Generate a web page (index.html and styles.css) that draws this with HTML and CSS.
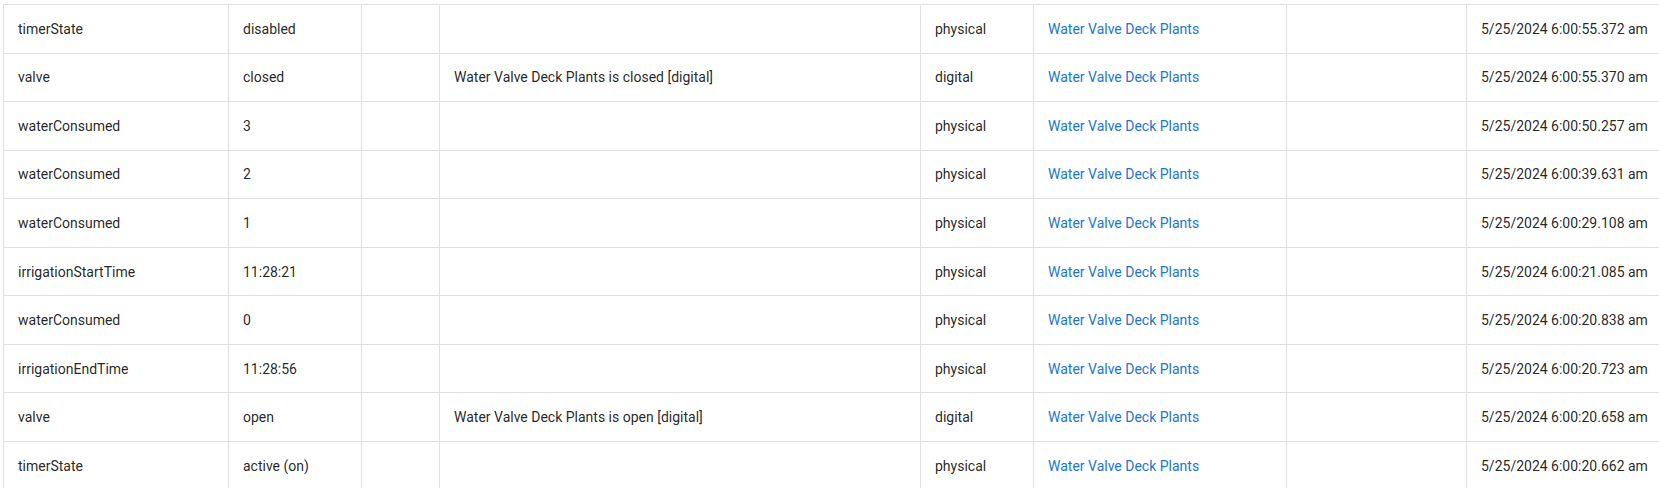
FILE: index.html
```html
<!DOCTYPE html>
<html>
<head>
<meta charset="utf-8">
<link rel="stylesheet" href="styles.css">
</head>
<body>
<div class="wrap">
<table class="events">
<colgroup>
<col class="c-name"><col class="c-value"><col class="c-unit"><col class="c-desc"><col class="c-type"><col class="c-dev"><col class="c-extra"><col class="c-date">
</colgroup>
<tbody>
<tr><td>timerState</td><td>disabled</td><td></td><td></td><td>physical</td><td><a href="#">Water Valve Deck Plants</a></td><td></td><td>5/25/2024 6:00:55.372 am</td></tr>
<tr><td>valve</td><td>closed</td><td></td><td>Water Valve Deck Plants is closed [digital]</td><td>digital</td><td><a href="#">Water Valve Deck Plants</a></td><td></td><td>5/25/2024 6:00:55.370 am</td></tr>
<tr><td>waterConsumed</td><td>3</td><td></td><td></td><td>physical</td><td><a href="#">Water Valve Deck Plants</a></td><td></td><td>5/25/2024 6:00:50.257 am</td></tr>
<tr><td>waterConsumed</td><td>2</td><td></td><td></td><td>physical</td><td><a href="#">Water Valve Deck Plants</a></td><td></td><td>5/25/2024 6:00:39.631 am</td></tr>
<tr><td>waterConsumed</td><td>1</td><td></td><td></td><td>physical</td><td><a href="#">Water Valve Deck Plants</a></td><td></td><td>5/25/2024 6:00:29.108 am</td></tr>
<tr><td>irrigationStartTime</td><td>11:28:21</td><td></td><td></td><td>physical</td><td><a href="#">Water Valve Deck Plants</a></td><td></td><td>5/25/2024 6:00:21.085 am</td></tr>
<tr><td>waterConsumed</td><td>0</td><td></td><td></td><td>physical</td><td><a href="#">Water Valve Deck Plants</a></td><td></td><td>5/25/2024 6:00:20.838 am</td></tr>
<tr><td>irrigationEndTime</td><td>11:28:56</td><td></td><td></td><td>physical</td><td><a href="#">Water Valve Deck Plants</a></td><td></td><td>5/25/2024 6:00:20.723 am</td></tr>
<tr><td>valve</td><td>open</td><td></td><td>Water Valve Deck Plants is open [digital]</td><td>digital</td><td><a href="#">Water Valve Deck Plants</a></td><td></td><td>5/25/2024 6:00:20.658 am</td></tr>
<tr><td>timerState</td><td>active (on)</td><td></td><td></td><td>physical</td><td><a href="#">Water Valve Deck Plants</a></td><td></td><td>5/25/2024 6:00:20.662 am</td></tr>
</tbody>
</table>
</div>
</body>
</html>
```
FILE: styles.css
```css
html, body {
  margin: 0;
  padding: 0;
  background: #ffffff;
  overflow: hidden;
}
.wrap {
  padding: 4px 0 0 3px;
}
.events {
  border-collapse: collapse;
  table-layout: fixed;
  width: 1700px;
  font-family: Roboto, "Liberation Sans", sans-serif;
  font-size: 14px;
  color: rgba(0, 0, 0, 0.87);
}
.c-name { width: 225px; }
.c-value { width: 133px; }
.c-unit { width: 78px; }
.c-desc { width: 481px; }
.c-type { width: 113px; }
.c-dev { width: 253px; }
.c-extra { width: 180px; }
.c-date { width: 237px; }
.events td {
  border: 1px solid #e0e0e0;
  height: 48.56px;
  padding: 0 14px;
  box-sizing: border-box;
  white-space: nowrap;
  vertical-align: middle;
}
.events a {
  color: #1976d2;
  text-decoration: none;
}
```
